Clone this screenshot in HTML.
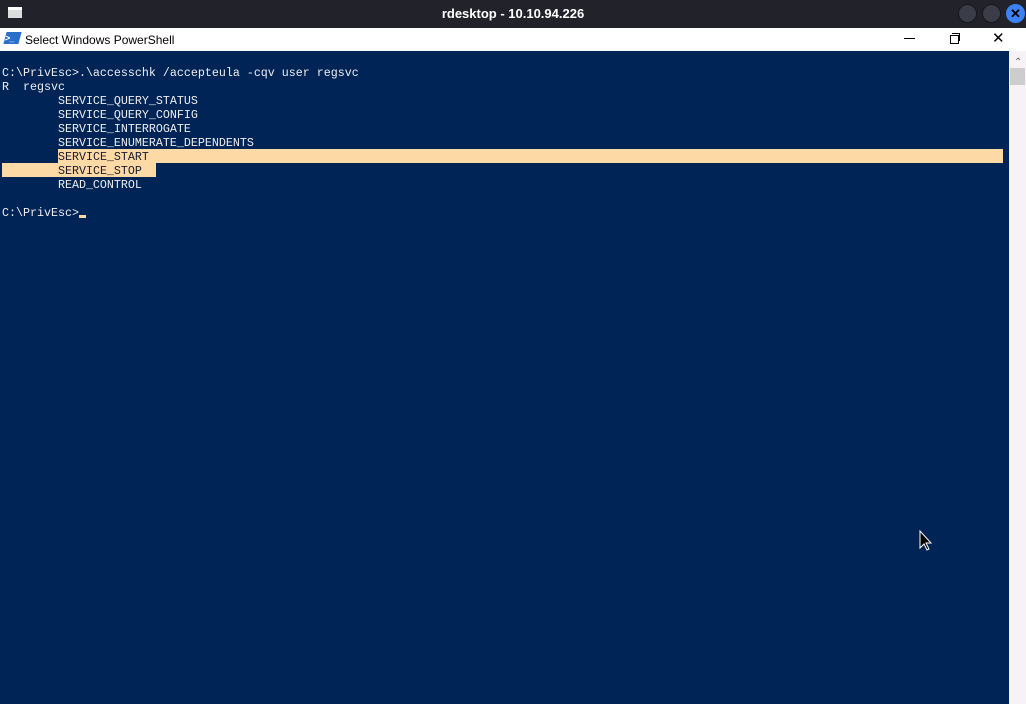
<!DOCTYPE html><html><head><style>
body{margin:0;width:1026px;height:704px;overflow:hidden;background:#012456;position:relative;font-family:"Liberation Sans",sans-serif}
.top{position:absolute;left:0;top:0;width:1026px;height:28px;background:#22232a;color:#fff;font-weight:bold;font-size:13px}
.tb{position:absolute;left:0;top:28px;width:1026px;height:23px;background:#fff;font-size:12px;color:#000}
.con{position:absolute;left:0;top:51px;width:1009px;height:653px;background:#012456}
.sb{position:absolute;left:1009px;top:51px;width:17px;height:653px;background:#f7f2f5}
pre{margin:0;position:absolute;left:2px;top:66px;font-family:"Liberation Mono",monospace;font-size:11.67px;line-height:14px;color:#eeedf0}
.hl{position:absolute;background:#fdd9a6}
.c{position:absolute;width:17px;height:17px;border-radius:50%;top:4px;background:#3a3d47;border:1px solid #15161a}
</style></head><body>
<div class="top">
<div style="position:absolute;left:8px;top:7px;width:14px;height:11px;background:#ddd;border-top:3px solid #fff;box-sizing:border-box"></div>
<div style="position:absolute;left:0;width:1026px;text-align:center;top:6px">rdesktop - 10.10.94.226</div>
<div class="c" style="left:958px"></div><div class="c" style="left:982px"></div>
<div class="c" style="left:1006px;background:#3b82f6;border-color:#3b82f6;color:#000;text-align:center;line-height:17px;font-size:13px">✕</div>
</div>
<div class="tb">
<div style="position:absolute;left:5px;top:4px;width:15px;height:12px;background:#2a6fc9;color:#fff;font-size:9px;line-height:12px;font-weight:bold;transform:skewX(-15deg)">&gt;_</div>
<div style="position:absolute;left:25px;top:5px">Select Windows PowerShell</div>
<div style="position:absolute;left:904px;top:10px;width:11px;height:1px;background:#000"></div>
<div style="position:absolute;left:952px;top:5px;width:7px;height:7px;border:1px solid #000;border-left:none;border-bottom:none"></div>
<div style="position:absolute;left:950px;top:7px;width:7px;height:7px;border:1px solid #000;background:#fff"></div>
<div style="position:absolute;left:992px;top:1px;font-size:15px">✕</div>
</div>
<div class="con"></div>
<div class="sb"><div style="position:absolute;left:5px;top:6px;color:#666;font-size:10px">⌃</div><div style="position:absolute;left:1px;top:17px;width:15px;height:17px;background:#cdcdcd"></div></div>
<div class="hl" style="left:58px;top:149px;width:945px;height:14px"></div>
<div class="hl" style="left:2px;top:163px;width:154px;height:14px"></div>
<pre>C:\PrivEsc&gt;.\accesschk /accepteula -cqv user regsvc
R  regsvc
        SERVICE_QUERY_STATUS
        SERVICE_QUERY_CONFIG
        SERVICE_INTERROGATE
        SERVICE_ENUMERATE_DEPENDENTS
        <span style="color:#1c1c2a">SERVICE_START</span>
        <span style="color:#1c1c2a">SERVICE_STOP</span>
        READ_CONTROL

C:\PrivEsc&gt;</pre>
<div style="position:absolute;left:79px;top:215px;width:7px;height:3px;background:#fdd9a6"></div>
<svg style="position:absolute;left:919px;top:530px" width="14" height="22"><path d="M1 1 L1 18 L5 14 L8 20 L10 19 L7 13 L12 13 Z" fill="#000" stroke="#fff" stroke-width="1"/></svg>
</body></html>
